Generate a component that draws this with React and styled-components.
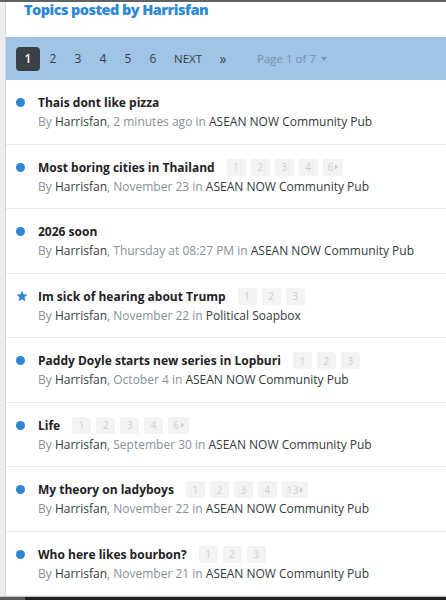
import React from 'react'
import styled, { createGlobalStyle } from 'styled-components'

const TOPICS = [
  { title: 'Thais dont like pizza', date: '2 minutes ago', forum: 'ASEAN NOW Community Pub', pages: [] },
  { title: 'Most boring cities in Thailand', date: 'November 23', forum: 'ASEAN NOW Community Pub', pages: ['1', '2', '3', '4'], last: '6' },
  { title: '2026 soon', date: 'Thursday at 08:27 PM', forum: 'ASEAN NOW Community Pub', pages: [] },
  { title: 'Im sick of hearing about Trump', date: 'November 22', forum: 'Political Soapbox', pages: ['1', '2', '3'], starred: true },
  { title: 'Paddy Doyle starts new series in Lopburi', date: 'October 4', forum: 'ASEAN NOW Community Pub', pages: ['1', '2', '3'] },
  { title: 'Life', date: 'September 30', forum: 'ASEAN NOW Community Pub', pages: ['1', '2', '3', '4'], last: '6' },
  { title: 'My theory on ladyboys', date: 'November 22', forum: 'ASEAN NOW Community Pub', pages: ['1', '2', '3', '4'], last: '13' },
  { title: 'Who here likes bourbon?', date: 'November 21', forum: 'ASEAN NOW Community Pub', pages: ['1', '2', '3'] },
]

const PAGES = ['1', '2', '3', '4', '5', '6']

export default function App() {
  return (
    <>
      <GlobalStyle />
      <TopStrip />
      <Shell>
        <Rail />
        <Main>
          <Header>
            <Title>Topics posted by Harrisfan</Title>
          </Header>
          <PageBar>
            {PAGES.map((p) => (
              <PageItem key={p} $active={p === '1'}>{p}</PageItem>
            ))}
            <PageItem $wide>NEXT</PageItem>
            <PageItem $arrow>»</PageItem>
            <PageJump>
              Page 1 of 7 <Caret />
            </PageJump>
          </PageBar>
          <List>
            {TOPICS.map((t) => (
              <Row key={t.title}>
                <Marker>
                  {t.starred ? (
                    <svg width="12" height="12" viewBox="0 0 24 24">
                      <path
                        d="M12 1.5l3.1 7.2 7.8.7-5.9 5.2 1.8 7.7L12 18.3l-6.8 4 1.8-7.7-5.9-5.2 7.8-.7z"
                        fill="#2f86d3"
                      />
                    </svg>
                  ) : (
                    <Dot />
                  )}
                </Marker>
                <Body>
                  <TitleLine>
                    <TopicTitle>{t.title}</TopicTitle>
                    {t.pages.length > 0 && (
                      <MiniPages>
                        {t.pages.map((p) => (
                          <MiniPage key={p}>{p}</MiniPage>
                        ))}
                        {t.last && (
                          <MiniPage>
                            {t.last}
                            <MiniCaret />
                          </MiniPage>
                        )}
                      </MiniPages>
                    )}
                  </TitleLine>
                  <Meta>
                    By <Strong>Harrisfan</Strong>, {t.date} in <Strong>{t.forum}</Strong>
                  </Meta>
                </Body>
              </Row>
            ))}
          </List>
        </Main>
      </Shell>
      <BottomStrip>
        <BottomLeft />
      </BottomStrip>
    </>
  )
}

const GlobalStyle = createGlobalStyle`
  html, body {
    margin: 0;
    padding: 0;
    background: #ffffff;
    font-family: "Open Sans", "Liberation Sans", sans-serif;
    overflow: hidden;
  }
  * { box-sizing: border-box; }
`

const TopStrip = styled.div`
  height: 2px;
  background: #5f6266;
`

const Shell = styled.div`
  display: flex;
  align-items: stretch;
`

const Rail = styled.div`
  flex: 0 0 6px;
  background: #ececec;
  border-right: 1px solid #d6d6d6;
`

const Main = styled.div`
  flex: 1;
  min-width: 0;
  background: #ffffff;
`

const Header = styled.div`
  height: 35px;
  padding: 0 0 0 18px;
`

const Title = styled.h1`
  margin: 0;
  font-family: "Open Sans", sans-serif;
  font-size: 14.5px;
  font-weight: 800;
  line-height: 15px;
  color: #2f88d4;
  letter-spacing: -0.55px;
`

const PageBar = styled.div`
  height: 43px;
  background: #a0c4e7;
  display: flex;
  align-items: center;
  padding: 0 0 0 10px;
  gap: 1px;
`

const PageItem = styled.span`
  min-width: 24px;
  height: 24px;
  padding: ${(p) => (p.$wide ? '0 8px' : '0')};
  display: inline-flex;
  align-items: center;
  justify-content: center;
  border-radius: 4px;
  font-size: ${(p) => (p.$wide ? '11.5px' : p.$arrow ? '14px' : '12px')};
  font-weight: ${(p) => (p.$active ? 600 : 400)};
  color: ${(p) => (p.$active ? '#ffffff' : '#3b3f45')};
  background: ${(p) => (p.$active ? '#3c4047' : 'transparent')};
`

const PageJump = styled.span`
  margin-left: 21px;
  display: inline-flex;
  align-items: center;
  gap: 5px;
  font-size: 11.5px;
  color: #7b91aa;
`

const Caret = styled.span`
  width: 0;
  height: 0;
  border-left: 3.5px solid transparent;
  border-right: 3.5px solid transparent;
  border-top: 4px solid #7b91aa;
`

const List = styled.ul`
  list-style: none;
  margin: 0;
  padding: 0;
`

const Row = styled.li`
  display: flex;
  align-items: flex-start;
  padding: 13px 0 12.5px 10px;
  border-bottom: 1px solid #ececec;
`

const Marker = styled.div`
  flex: 0 0 22px;
  height: 19px;
  display: flex;
  align-items: center;
`

const Dot = styled.span`
  width: 9px;
  height: 9px;
  border-radius: 50%;
  background: #2f86d3;
`

const Body = styled.div`
  flex: 1;
  min-width: 0;
`

const TitleLine = styled.div`
  display: flex;
  align-items: center;
  height: 19px;
`

const TopicTitle = styled.span`
  font-size: 12px;
  font-weight: 700;
  color: #1e2126;
  white-space: nowrap;
`

const MiniPages = styled.span`
  display: inline-flex;
  gap: 5px;
  margin-left: 12px;
`

const MiniPage = styled.span`
  min-width: 19px;
  height: 17px;
  padding: 0 5px;
  display: inline-flex;
  align-items: center;
  justify-content: center;
  gap: 2px;
  border-radius: 2px;
  background: #f3f3f3;
  color: #cdcfd2;
  font-size: 10px;
`

const MiniCaret = styled.span`
  width: 0;
  height: 0;
  border-top: 3px solid transparent;
  border-bottom: 3px solid transparent;
  border-left: 3px solid #cdcfd2;
`

const Meta = styled.div`
  font-size: 12px;
  line-height: 19px;
  color: #8a9099;
  white-space: nowrap;
`

const Strong = styled.span`
  color: #353a40;
`

const BottomStrip = styled.div`
  height: 5px;
  border-top: 1px solid #c8c8c8;
  background: #1f1f1f;
  display: flex;
`

const BottomLeft = styled.div`
  width: 25px;
  background: #5a5a5a;
`
